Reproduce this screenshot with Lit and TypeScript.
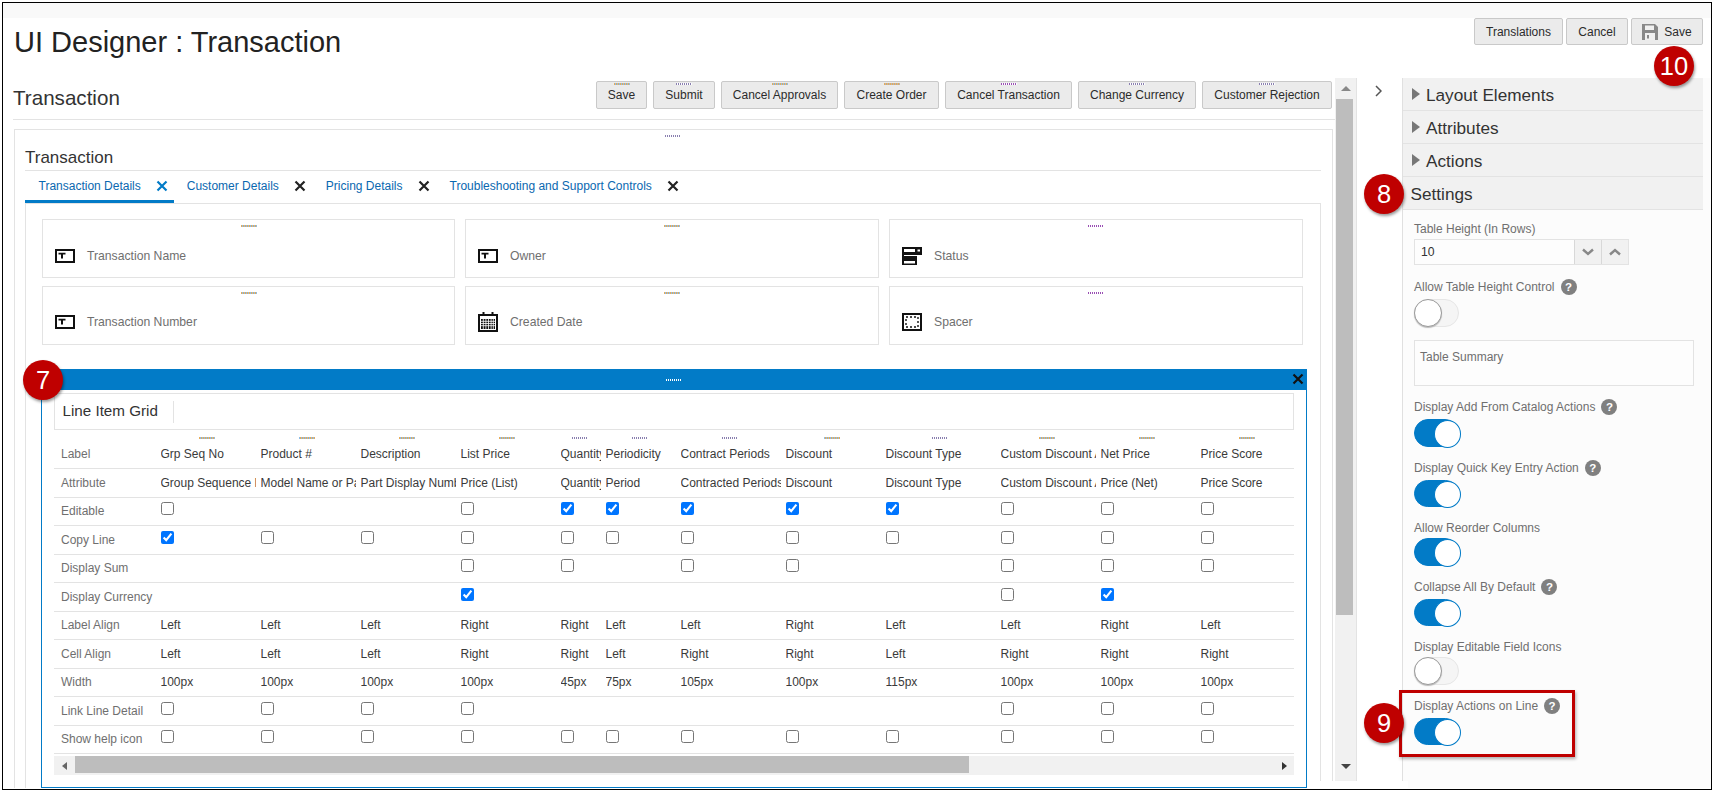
import { LitElement, html, css, svg } from "lit";
import { customElement } from "lit/decorators.js";

const O = ["#e8ac58", "#8cbce6"], B = ["#8cbce6", "#e8ac58"], P = ["#9a4fb4", "#ffffff"], G = ["#e8ac58", "#b4b4b4"], D = ["#8a80b0", "#ffffff"], W = ["#ffffff", "#027bc7"];

const headerButtons: [string, string[], number][] = [
  ["Save", O, 51], ["Submit", D, 62], ["Cancel Approvals", O, 117], ["Create Order", G, 95],
  ["Cancel Transaction", P, 127], ["Change Currency", D, 118], ["Customer Rejection", D, 130],
];
const tabs = ["Transaction Details", "Customer Details", "Pricing Details", "Troubleshooting and Support Controls"];

const COLS = [100, 100, 100, 100, 45, 75, 105, 100, 115, 100, 100, 100];
const colTemplate = "106.5px " + COLS.map((c) => c + "px").join(" ");
const handleColors = [O, B, O, O, D, D, D, B, D, O, O, O];

type Cell = string | 0 | 1 | null;
const rows: [string, Cell[]][] = [
  ["Label", ["Grp Seq No", "Product #", "Description", "List Price", "Quantity", "Periodicity", "Contract Periods", "Discount", "Discount Type", "Custom Discount Amount", "Net Price", "Price Score"]],
  ["Attribute", ["Group Sequence Number", "Model Name or Part Number", "Part Display Number", "Price (List)", "Quantity", "Period", "Contracted Periods", "Discount", "Discount Type", "Custom Discount Amount", "Price (Net)", "Price Score"]],
  ["Editable", [0, null, null, 0, 1, 1, 1, 1, 1, 0, 0, 0]],
  ["Copy Line", [1, 0, 0, 0, 0, 0, 0, 0, 0, 0, 0, 0]],
  ["Display Sum", [null, null, null, 0, 0, null, 0, 0, null, 0, 0, 0]],
  ["Display Currency", [null, null, null, 1, null, null, null, null, null, 0, 1, null]],
  ["Label Align", ["Left", "Left", "Left", "Right", "Right", "Left", "Left", "Right", "Left", "Left", "Right", "Left"]],
  ["Cell Align", ["Left", "Left", "Left", "Right", "Right", "Left", "Right", "Right", "Left", "Right", "Right", "Right"]],
  ["Width", ["100px", "100px", "100px", "100px", "45px", "75px", "105px", "100px", "115px", "100px", "100px", "100px"]],
  ["Link Line Detail", [0, 0, 0, 0, null, null, null, null, null, 0, 0, 0]],
  ["Show help icon", [0, 0, 0, 0, 0, 0, 0, 0, 0, 0, 0, 0]],
];

const textIcon = svg`<svg class="ficon" viewBox="0 0 20 14" width="20" height="14"><rect x="1" y="1" width="18" height="12" fill="#fff" stroke="#111" stroke-width="2"/><path d="M3.5 3.8H10.5V5.6H8V9.6H6V5.6H3.5z" fill="#111"/></svg>`;
const calIcon = svg`<svg class="ficon" viewBox="0 0 20 20" width="20" height="20"><rect x="1" y="3" width="18" height="16" fill="#fff" stroke="#111" stroke-width="2"/><rect x="4.5" y="0" width="2" height="4" fill="#111"/><rect x="13.5" y="0" width="2" height="4" fill="#111"/><rect x="3" y="7" width="14" height="10" fill="#111"/><path d="M3 9.3h14M3 11.5h14M3 13.7h14M5.3 7v10M7.9 7v10M10.5 7v10M13.1 7v10M15.3 7v10" stroke="#fff" stroke-width=".8"/></svg>`;
const statusIcon = svg`<svg class="ficon" viewBox="0 0 20 18" width="20" height="18"><path d="M0 0h20v8h-5v10H0z" fill="#111"/><rect x="2" y="2" width="11" height="3" fill="#fff"/><rect x="15.5" y="2.5" width="2.5" height="2" fill="#fff"/><rect x="2" y="8" width="13" height="1" fill="#fff"/><rect x="2" y="14" width="11" height="2.5" fill="#fff"/></svg>`;
const spacerIcon = svg`<svg class="ficon" viewBox="0 0 20 18" width="20" height="18"><rect x="1" y="1" width="18" height="16" fill="#fff" stroke="#111" stroke-width="2"/><rect x="4" y="4" width="12" height="10" fill="none" stroke="#111" stroke-width="1.4" stroke-dasharray="2 2"/></svg>`;
const floppy = svg`<svg class="floppy" viewBox="0 0 16 16" width="16" height="16"><path d="M0 0h13l3 3v13H0z" fill="#888"/><rect x="3" y="1.5" width="9" height="4.5" fill="#f0f0f0"/><rect x="3" y="9" width="10" height="7" fill="#f0f0f0"/><rect x="5" y="11" width="2" height="3.5" fill="#888"/></svg>`;
const xIcon = svg`<svg viewBox="0 0 12 12" width="12" height="12"><path d="M1.5 1.5l9 9M10.5 1.5l-9 9" stroke="currentColor" stroke-width="2.2" fill="none"/></svg>`;

@customElement("app-root")
export class AppRoot extends LitElement {
  static styles = css`
    :host { display: block; width: 1714px; height: 792px; overflow: hidden; background: #fff; font-family: "Liberation Sans", Arial, sans-serif; color: #333; position: relative; }
    * { box-sizing: border-box; }
    .frame { margin: 2px 0 0 2px; width: 1710px; height: 788px; border: 1px solid #000; display: flex; flex-direction: column; overflow: hidden; background: #fff; }
    .band { height: 15px; background: #f9f9f9; flex: none; }
    .top { height: 60px; flex: none; display: flex; justify-content: space-between; align-items: flex-start; padding: 0 8px 0 11px; }
    h1 { margin: 5px 0 0; font-size: 29px; line-height: 38px; font-weight: 400; color: #222; }
    .btns { display: flex; gap: 3px; }
    .btn { height: 27px; display: flex; align-items: center; justify-content: center; gap: 6px; background: #ebebeb; border: 1px solid #c9c9c9; border-radius: 2px; font-size: 12px; color: #2b2b2b; }
    .w-t { width: 89px; }
    .w-c { width: 62px; }
    .w-s { width: 72px; }
    .floppy { flex: none; }
    .body { height: 710px; flex: none; display: flex; align-items: stretch; }
    .left { width: 1332px; flex: none; padding-left: 10px; display: flex; flex-direction: column; overflow: hidden; }
    .sechead { height: 42px; flex: none; border-bottom: 1px solid #e3e3e3; display: flex; justify-content: space-between; align-items: flex-start; }
    h2 { margin: 8px 0 0; font-size: 20.6px; line-height: 24px; font-weight: 400; color: #333; }
    .sbtns { display: flex; gap: 6px; margin-top: 3px; padding-right: 3px; }
    .sbtn { position: relative; height: 28px; display: flex; align-items: center; justify-content: center; background: #ebebeb; border: 1px solid #c9c9c9; border-radius: 2px; font-size: 12px; color: #2b2b2b; }
    .sbtn .handle { position: absolute; left: 50%; top: 1px; margin-left: -8px; }
    .handle { display: block; width: 16px; height: 2px; flex: none; }
    .panel { margin: 9px 0 0 1px; width: 1319px; flex: 1; min-height: 0; border: 1px solid #e3e3e3; border-bottom: 0; padding: 0 11px 0 10px; display: flex; flex-direction: column; }
    .phandle { height: 7px; flex: none; display: flex; justify-content: center; align-items: flex-end; }
    h3 { margin: 0; height: 34px; flex: none; border-bottom: 1px solid #e3e3e3; font-size: 17px; font-weight: 400; line-height: 17px; padding: 11.5px 0 0 0; color: #333; }
    .tabs { display: flex; height: 33px; flex: none; border-bottom: 1px solid #e3e3e3; }
    .tab { display: flex; align-items: center; height: 32px; padding: 0 0 3px 13px; color: #0a68b0; font-size: 12px; }
    .tab.on { border-bottom: 3px solid #027bc7; padding-bottom: 0; padding-left: 13.5px; color: #0a68b0; }
    .tab svg { margin: 0 7px 0 15px; color: #222; }
    .tab.on svg { color: #027bc7; margin-right: 6px; }
    .content { flex: 1; min-height: 0; border: 1px solid #e3e3e3; border-width: 0 1px; padding: 15px 17px 0 16px; display: flex; flex-direction: column; overflow: hidden; }
    .fields { display: grid; grid-template-columns: 413px 414px 414px; column-gap: 10px; row-gap: 8px; flex: none; }
    .field { height: 59px; border: 1px solid #e3e3e3; display: flex; flex-direction: column; }
    .field .fh { height: 7px; flex: none; display: flex; justify-content: center; align-items: flex-end; }
    .fbody { flex: 1; display: flex; align-items: center; padding: 8px 0 0 12px; gap: 12px; font-size: 12.2px; color: #6f6f6f; }
    .field:nth-child(n + 4) .fbody { padding-top: 6px; }
    .ficon { flex: none; }
    .grid { position: relative; margin: 24px 0 0 -1px; height: 419px; flex: none; width: 1266px; border: 1px solid #027bc7; border-top: 0; display: flex; flex-direction: column; }
    .ghead { height: 21px; margin: 0 -0.5px; flex: none; background: #027bc7; display: flex; justify-content: center; align-items: center; position: relative; color: #111; }
    .ghead .close { position: absolute; right: 3px; top: 4px; display: flex; }
    .inner { flex: 1; min-height: 0; padding: 3px 12px 0 12px; display: flex; flex-direction: column; overflow: hidden; }
    .gtitle { height: 37px; flex: none; border: 1px solid #e3e3e3; display: flex; align-items: center; }
    .gtitle span { height: 22px; padding: 0 15px 0 7.5px; border-right: 1px solid #e3e3e3; font-size: 15.2px; line-height: 20px; color: #333; }
    .scroller { display: flex; flex-direction: column; overflow: hidden; flex: none; }
    .row { display: grid; height: 28.5px; align-items: center; border-bottom: 1px solid #e3e3e3; font-size: 12px; flex: none; }
    .hrow { height: 10.5px; border: 0; align-items: end; }
    .hc { display: flex; justify-content: center; padding-right: 7px; padding-bottom: 1.5px; }
    .lab { padding: 0 0 0 7px; color: #6f6f6f; white-space: nowrap; }
    .cell { white-space: nowrap; overflow: hidden; margin-right: 5px; color: #3a3a3a; height: 100%; display: flex; align-items: center; }
    input[type="checkbox"] { margin: 0 0 5px 0; width: 13px; height: 13px; flex: none; }
    .hs { height: 19px; margin-top: 2px; flex: none; background: #f1f1f1; display: flex; align-items: flex-start; position: relative; }
    .hs .larr { width: 21px; flex: none; height: 19px; display: flex; align-items: center; justify-content: center; }
    .hs .thumb { width: 894px; height: 17px; background: #bdbdbd; }
    .hs .rarr { margin-left: auto; width: 19px; height: 19px; display: flex; align-items: center; justify-content: center; }
    .vs { width: 22px; height: 703px; flex: none; background: #f1f1f1; border-right: 1px solid #e3e3e3; display: flex; flex-direction: column; align-items: center; padding-top: 8px; }
    .vs .thumb { width: 17px; height: 516px; margin: 8px 2px 0 0; background: #bdbdbd; flex: none; }
    .vs .dn { margin-top: auto; margin-bottom: 8px; }
    .chev { width: 45px; flex: none; background: #fff; padding: 7px 0 0 18px; }
    .chev svg { display: block; }
    .side { width: 301px; flex: none; background: #fcfcfc; border-left: 1px solid #e0e0e0; }
    .acc { height: 33px; background: #f1f1f1; border-bottom: 1px solid #e3e3e3; display: flex; align-items: center; font-size: 17.2px; color: #333; padding: 3px 0 0 9px; gap: 6px; }
    .acc.plain { padding-left: 7.5px; }
    .acc svg { margin-top: -4px; }
    .sbody { padding: 11px 0 0 11px; }
    .lbl { height: 18px; line-height: 17px; font-size: 12px; color: #6f6f6f; display: flex; gap: 6px; white-space: nowrap; }
    .lbl.h { height: 20px; }
    .help { width: 16px; height: 16px; border-radius: 50%; background: #808080; color: #fff; font-size: 11.5px; font-weight: 700; line-height: 16px; text-align: center; flex: none; }
    .num { width: 215px; height: 26px; border: 1px solid #e3e3e3; background: #fdfdfd; display: flex; font-size: 12.2px; color: #333; }
    .num .v { flex: 1; padding-left: 6px; line-height: 24px; }
    .num .sp { width: 27px; background: #f1f1f1; border-left: 1px solid #d8d8d8; display: flex; align-items: center; justify-content: center; }
    .f { margin-top: 13px; }
    .f.first { margin-top: 14px; }
    .tog { width: 45px; height: 27.5px; border-radius: 14px; position: relative; background: #f5f5f5; border: 1px solid #e6e6e6; }
    .tog::after { content: ""; position: absolute; top: -1px; left: -1px; width: 26px; height: 26px; border-radius: 50%; background: #fff; border: 1px solid #9a9a9a; box-shadow: 0 1px 1px #bbb; }
    .tog.on { background: #027bc7; border-color: #027bc7; }
    .tog.on::after { left: 19px; top: 0; width: 25px; height: 25.5px; border: 1px solid #027bc7; box-shadow: none; }
    .summary { margin-top: 13.5px; width: 280px; height: 46px; border: 1px solid #e3e3e3; background: #fdfdfd; padding: 9px 0 0 5px; font-size: 12px; color: #6f6f6f; }
    .rest { flex: 1; background: #fcfcfc; }
    .mask { position: absolute; left: 1308px; top: 781px; width: 100px; height: 8px; background: #fff; z-index: 1; }
    .badge { position: absolute; width: 40px; height: 40px; border-radius: 50%; background: #bf0000; color: #fff; font-size: 25.5px; line-height: 40px; text-align: center; box-shadow: 1px 2px 3px rgba(0,0,0,.4); z-index: 3; }
    .b7 { left: 23px; top: 360px; }
    .b8 { left: 1364px; top: 174px; }
    .b9 { left: 1364px; top: 703px; }
    .b10 { left: 1654px; top: 46px; }
    .redbox { position: absolute; left: 1399px; top: 690px; width: 176px; height: 67px; border: 3px solid #bf0000; box-shadow: 1px 2px 3px rgba(0,0,0,.3); z-index: 2; pointer-events: none; }
  `;

  private handle(c: string[]) {
    return html`<span class="handle" style="background: repeating-linear-gradient(90deg, ${c[0]} 0 1px, ${c[1]} 1px 2px)"></span>`;
  }

  private toggleField(label: string, help: boolean, on: boolean, first = false) {
    return html`<div class="f ${first ? "first" : ""}">
      <div class="lbl ${help ? "h" : ""}"><span>${label}</span>${help ? html`<span class="help">?</span>` : ""}</div>
      <div class="tog ${on ? "on" : ""}"></div>
    </div>`;
  }

  private renderCell(c: Cell) {
    if (c === null) return html`<div class="cell"></div>`;
    if (c === 0 || c === 1) return html`<div class="cell"><input type="checkbox" .checked=${c === 1} /></div>`;
    return html`<div class="cell"><span>${c}</span></div>`;
  }

  private arrow(d: string, w = 12, h = 8, fill = "#666") {
    return html`<svg viewBox="0 0 ${w} ${h}" width=${w} height=${h}><path d=${d} fill=${fill} /></svg>`;
  }

  render() {
    const fields: [string, unknown, string[]][] = [
      ["Transaction Name", textIcon, O], ["Owner", textIcon, O], ["Status", statusIcon, P],
      ["Transaction Number", textIcon, O], ["Created Date", calIcon, O], ["Spacer", spacerIcon, P],
    ];
    return html`
      <div class="frame">
        <div class="band"></div>
        <div class="top">
          <h1>UI Designer : Transaction</h1>
          <div class="btns">
            <div class="btn w-t">Translations</div>
            <div class="btn w-c">Cancel</div>
            <div class="btn w-s">${floppy}Save</div>
          </div>
        </div>
        <div class="body">
          <div class="left">
            <div class="sechead">
              <h2>Transaction</h2>
              <div class="sbtns">
                ${headerButtons.map(([t, c, w]) => html`<div class="sbtn" style="width:${w}px">${this.handle(c)}${t}</div>`)}
              </div>
            </div>
            <div class="panel">
              <div class="phandle">${this.handle(D)}</div>
              <h3>Transaction</h3>
              <div class="tabs">
                ${tabs.map((t, i) => html`<div class="tab ${i === 0 ? "on" : ""}">${t}${xIcon}</div>`)}
              </div>
              <div class="content">
                <div class="fields">
                  ${fields.map(([t, ic, c]) => html`<div class="field"><div class="fh">${this.handle(c)}</div><div class="fbody">${ic}<span>${t}</span></div></div>`)}
                </div>
                <div class="grid">
                  <div class="ghead">${this.handle(W)}<span class="close">${xIcon}</span></div>
                  <div class="inner">
                    <div class="gtitle"><span>Line Item Grid</span></div>
                    <div class="scroller">
                      <div class="row hrow" style="grid-template-columns:${colTemplate}">
                        <div></div>
                        ${handleColors.map((c) => html`<div class="hc">${this.handle(c)}</div>`)}
                      </div>
                      ${rows.map(([l, cells]) => html`<div class="row" style="grid-template-columns:${colTemplate}"><div class="lab">${l}</div>${cells.map((c) => this.renderCell(c))}</div>`)}
                    </div>
                    <div class="hs">
                      <div class="larr">${this.arrow("M5 0v8L0 4z", 5, 8)}</div>
                      <div class="thumb"></div>
                      <div class="rarr">${this.arrow("M0 0v8l5-4z", 5, 8, "#333")}</div>
                    </div>
                  </div>
                </div>
              </div>
            </div>
          </div>
          <div class="vs">
            ${this.arrow("M5 0l5 5H0z", 10, 5, "#888")}
            <div class="thumb"></div>
            <div class="dn">${this.arrow("M0 0h10L5 5z", 10, 5, "#444")}</div>
          </div>
          <div class="chev"><svg viewBox="0 0 7 12" width="7" height="12"><path d="M1 1l5 5-5 5" stroke="#555" stroke-width="1.5" fill="none"/></svg></div>
          <div class="side">
            <div class="acc">${this.arrow("M0 0l8 6-8 6z", 8, 12, "#777")}Layout Elements</div>
            <div class="acc">${this.arrow("M0 0l8 6-8 6z", 8, 12, "#777")}Attributes</div>
            <div class="acc">${this.arrow("M0 0l8 6-8 6z", 8, 12, "#777")}Actions</div>
            <div class="acc plain">Settings</div>
            <div class="sbody">
              <div class="lbl">Table Height (In Rows)</div>
              <div class="num"><div class="v">10</div>
                <div class="sp"><svg viewBox="0 0 12 8" width="12" height="8"><path d="M1 1.5l5 4.5 5-4.5" stroke="#888" stroke-width="2.4" fill="none"/></svg></div>
                <div class="sp"><svg viewBox="0 0 12 8" width="12" height="8"><path d="M1 6.5l5-4.5 5 4.5" stroke="#888" stroke-width="2.4" fill="none"/></svg></div>
              </div>
              ${this.toggleField("Allow Table Height Control", true, false, true)}
              <div class="summary">Table Summary</div>
              ${this.toggleField("Display Add From Catalog Actions", true, true)}
              ${this.toggleField("Display Quick Key Entry Action", true, true)}
              ${this.toggleField("Allow Reorder Columns", false, true)}
              ${this.toggleField("Collapse All By Default", true, true)}
              ${this.toggleField("Display Editable Field Icons", false, false)}
              ${this.toggleField("Display Actions on Line", true, true)}
            </div>
          </div>
          <div class="rest"></div>
        </div>
      </div>
      <div class="mask"></div>
      <div class="redbox"></div>
      <div class="badge b7">7</div>
      <div class="badge b8">8</div>
      <div class="badge b9">9</div>
      <div class="badge b10">10</div>
    `;
  }
}
